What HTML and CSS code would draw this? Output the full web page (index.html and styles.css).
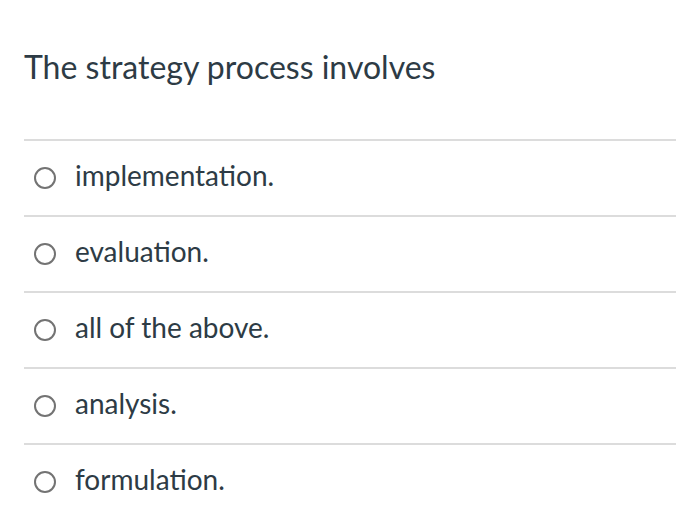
FILE: index.html
```html
<!DOCTYPE html>
<html>
<head>
<meta charset="utf-8">
<link rel="stylesheet" href="styles.css">
</head>
<body>
<div class="question">
  <h2 class="prompt">The strategy process involves</h2>
  <ul class="answers">
    <li class="answer"><span class="radio"></span><span class="label">implementation.</span></li>
    <li class="answer"><span class="radio"></span><span class="label">evaluation.</span></li>
    <li class="answer"><span class="radio"></span><span class="label">all of the above.</span></li>
    <li class="answer"><span class="radio"></span><span class="label">analysis.</span></li>
    <li class="answer"><span class="radio"></span><span class="label">formulation.</span></li>
  </ul>
</div>
</body>
</html>
```
FILE: styles.css
```css
html, body {
  margin: 0;
  padding: 0;
  background: #fff;
}
body {
  font-family: Lato, "Open Sans", sans-serif;
  color: #2d3b45;
}
.question {
  padding: 48px 0 0 24px;
}
.prompt {
  margin: 0;
  font-size: 32px;
  font-weight: 400;
  line-height: 1.2;
  height: 91px;
}
.answers {
  list-style: none;
  margin: 0;
  padding: 0;
}
.answer {
  display: flex;
  align-items: center;
  height: 74px;
  border-top: 2px solid #dcdcdc;
  padding-left: 10px;
}
.radio {
  width: 18px;
  height: 18px;
  border: 2px solid #737373;
  border-radius: 50%;
  flex: none;
}
.label {
  margin-left: 19px;
  margin-bottom: 4px;
  font-size: 28px;
  line-height: 1.2;
}
```
